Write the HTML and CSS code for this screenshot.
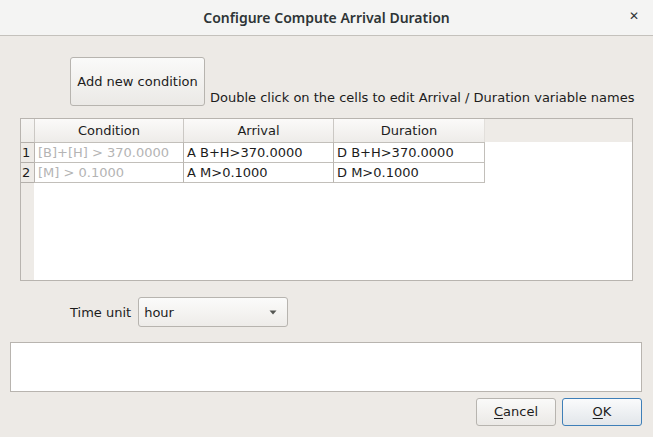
FILE: index.html
```html
<!DOCTYPE html>
<html>
<head>
<meta charset="utf-8">
<link rel="stylesheet" href="styles.css">
</head>
<body>
<div class="window">
  <div class="titlebar">
    <span class="title">Configure Compute Arrival Duration</span>
    <span class="close">&#x2715;</span>
  </div>
  <div class="content">
    <div class="top-row">
      <button class="btn add-btn">Add new condition</button>
      <span class="hint">Double click on the cells to edit Arrival / Duration variable names</span>
    </div>
    <div class="table-frame">
      <div class="grid">
        <div class="hcell corner"></div>
        <div class="hcell">Condition</div>
        <div class="hcell">Arrival</div>
        <div class="hcell last">Duration</div>
        <div class="hfill"></div>

        <div class="rnum">1</div>
        <div class="cell dim">[B]+[H] &gt; 370.0000</div>
        <div class="cell">A B+H&gt;370.0000</div>
        <div class="cell last">D B+H&gt;370.0000</div>
        <div class="fill"></div>

        <div class="rnum lastrow">2</div>
        <div class="cell dim lastrow">[M] &gt; 0.1000</div>
        <div class="cell lastrow">A M&gt;0.1000</div>
        <div class="cell last lastrow">D M&gt;0.1000</div>
        <div class="fill"></div>
      </div>
    </div>
    <div class="unit-row">
      <span class="unit-label">Time unit</span>
      <div class="combo">
        <span>hour</span>
        <svg class="arrow" width="8" height="5" viewBox="0 0 8 5"><path d="M0.5 0.5 L7.5 0.5 L4 4.5 Z" fill="#555753"/></svg>
      </div>
    </div>
    <div class="textarea"></div>
    <div class="actions">
      <button class="btn dlg-btn"><u>C</u>ancel</button>
      <button class="btn dlg-btn ok"><u>O</u>K</button>
    </div>
  </div>
</div>
</body>
</html>
```

FILE: styles.css
```css
* { box-sizing: border-box; }
html, body { margin: 0; padding: 0; }
body {
  width: 653px;
  height: 437px;
  overflow: hidden;
  background: #edeae6;
  font-family: "DejaVu Sans", sans-serif;
  font-size: 13px;
  color: #1c1c1c;
}
.window { width: 653px; height: 437px; display: flex; flex-direction: column; }
.titlebar {
  height: 36px;
  flex: none;
  background: #f4f4f3;
  border-bottom: 1px solid #c4c1bc;
  display: flex;
  align-items: center;
  justify-content: center;
  position: relative;
}
.title {
  font-family: "Noto Sans", "DejaVu Sans", sans-serif;
  font-weight: 600;
  font-size: 14px;
  color: #2e3436;
  margin-top: -1px;
}
.close {
  position: absolute;
  right: 14px;
  top: 9px;
  font-size: 12px;
  font-weight: bold;
  color: #2e3436;
}
.content { display: flex; flex-direction: column; padding-top: 21px; }
.top-row { display: flex; align-items: flex-end; padding-left: 70px; height: 49px; }
.btn {
  font-family: "DejaVu Sans", sans-serif;
  font-size: 13px;
  color: #1c1c1c;
  background: linear-gradient(to bottom, #fafaf9, #ebe9e6);
  border: 1px solid #b7b4af;
  border-radius: 3px;
  padding: 0;
  margin: 0;
}
.add-btn { width: 135px; height: 49px; }
.hint { margin-left: 5px; margin-bottom: 0; line-height: 16px; }
.table-frame {
  margin: 12px 0 0 20px;
  width: 613px;
  height: 163px;
  border: 1px solid #b8b4af;
  background: linear-gradient(to right, #eeebe7 13px, #ffffff 13px);
}
.grid {
  display: grid;
  grid-template-columns: 13px 149px 150px 152px 1fr;
  grid-template-rows: 23px 20px 21px;
}
.hcell {
  background: linear-gradient(to bottom, #fbfaf9, #eeece9);
  border-left: 1px solid #cbc8c4;
  text-align: center;
  line-height: 24px;
}
.hcell.corner { border-left: none; background: linear-gradient(to bottom, #f6f5f3, #eeece9); }
.hcell.last { border-right: 1px solid #e2dfdb; }
.hfill { background: #eeebe7; }
.rnum {
  border-top: 1px solid #b4b0ab;
  background: #eeebe7;
  font-size: 13px;
  line-height: 19px;
  padding-left: 1px;
}
.cell {
  background: #fff;
  border-top: 1px solid #c2bfba;
  border-left: 1px solid #b9b5b0;
  font-size: 13px;
  line-height: 19px;
  padding-left: 3px;
  white-space: nowrap;
  overflow: hidden;
}
.cell.dim { color: #b4b4b4; }
.cell.last { border-right: 1px solid #c2bfba; }
.lastrow { border-bottom: 1px solid #c2bfba; }
.rnum.lastrow { border-bottom-color: #b4b0ab; }
.fill { background: #fff; }
.unit-row { display: flex; align-items: center; margin-top: 16px; padding-left: 70px; height: 30px; }
.unit-label { margin-right: 7px; }
.combo {
  width: 150px;
  height: 30px;
  border: 1px solid #b7b4af;
  border-radius: 3px;
  background: linear-gradient(to bottom, #fbfbfa, #eeece9);
  display: flex;
  align-items: center;
  justify-content: space-between;
  padding: 0 10px 0 5px;
}
.arrow { display: block; margin-top: 1px; }
.textarea {
  margin: 15px 0 0 10px;
  width: 632px;
  height: 50px;
  background: #fff;
  border: 1px solid #b8b4af;
}
.actions { display: flex; justify-content: flex-end; gap: 6px; margin-top: 6px; padding-right: 11px; }
.dlg-btn { width: 80px; height: 28px; padding-bottom: 1px; }
.dlg-btn u { text-decoration-thickness: 1px; text-underline-offset: 2px; }
.ok {
  border-color: #3e7fb8;
  background: linear-gradient(to bottom, #fafbfc, #e2e6ea);
}
```
